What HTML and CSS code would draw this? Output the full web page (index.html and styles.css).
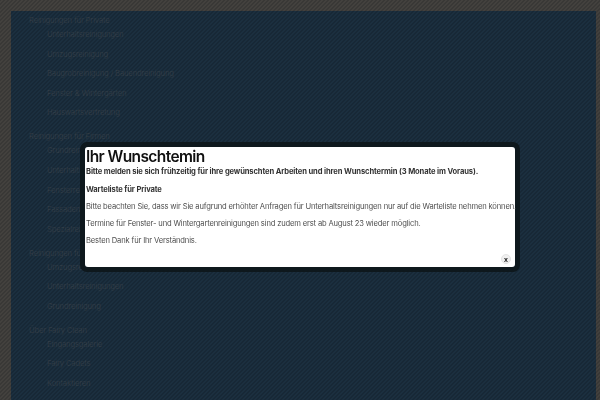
FILE: index.html
```html
<!DOCTYPE html>
<html lang="de">
<head>
    <meta charset="UTF-8">
    <title>Ihr Wunschtermin</title>
    <link rel="stylesheet" href="styles.css">
</head>
<body>
    <div class="page">
        <ul class="menu">
            <li class="group">Reinigungen für Private</li>
            <li>Unterhaltsreinigungen</li>
            <li>Umzugsreinigung</li>
            <li>Baugrobreinigung / Bauendreinigung</li>
            <li>Fenster &amp; Wintergärten</li>
            <li>Hauswartsvertretung</li>
            <li class="group">Reinigungen für Firmen</li>
            <li>Grundreinigung</li>
            <li>Unterhaltsreinigung</li>
            <li>Fensterreinigung</li>
            <li>Fassadenreinigung</li>
            <li>Spezialreinigung</li>
            <li class="group">Reinigungen für Diverse</li>
            <li>Umzugsreinigung</li>
            <li>Unterhaltsreinigungen</li>
            <li>Grundreinigung</li>
            <li class="group">Über Fairy Clean</li>
            <li>Eingangsgalerie</li>
            <li>Fairy Cadets</li>
            <li>Kontaktieren</li>
        </ul>
    </div>

    <div class="overlay"></div>

    <div class="modal">
        <div class="modal-body">
            <h2>Ihr Wunschtemin</h2>
            <p class="lead">Bitte melden sie sich frühzeitig für ihre gewünschten Arbeiten und ihren Wunschtermin (3 Monate im Voraus).</p>
            <p class="lead">Warteliste für Private</p>
            <p>Bitte beachten Sie, dass wir Sie aufgrund erhöhter Anfragen für Unterhaltsreinigungen nur auf die Warteliste nehmen können.</p>
            <p>Termine für Fenster- und Wintergartenreinigungen sind zudem erst ab August 23 wieder möglich.</p>
            <p>Besten Dank für Ihr Verständnis.</p>
            <button class="close">x</button>
        </div>
    </div>
</body>
</html>
```

FILE: styles.css
```css
html, body {
    margin: 0;
    height: 100%;
    overflow: hidden;
}
body {
    background-color: #4e4c49;
    font-family: Inter, "Open Sans", sans-serif;
}
.page {
    margin: 11px 4px 0 11px;
    height: 389px;
    background-color: #20374a;
    overflow: hidden;
}
.menu {
    list-style: none;
    margin: 0;
    padding: 0 0 0 36px;
    font-size: 7.6px;
    letter-spacing: -0.15px;
    color: #3b4955;
}
.menu li {
    height: 19.6px;
    line-height: 19.6px;
}
.menu .group {
    margin: 4.2px 0 -5.5px -18px;
}
.menu .group:first-child {
    margin-top: 0;
}
.overlay {
    position: fixed;
    top: 0;
    left: 0;
    right: 0;
    bottom: 0;
    background-image: repeating-linear-gradient(135deg, rgba(0, 0, 0, 0.26) 0, rgba(0, 0, 0, 0.26) 1.414px, rgba(0, 0, 0, 0.14) 1.414px, rgba(0, 0, 0, 0.14) 2.828px);
}
.modal {
    position: absolute;
    top: 142px;
    left: 80px;
    width: 430px;
    height: 120px;
    border: 5px solid #0e181d;
    border-radius: 7px;
}
.modal-body {
    position: relative;
    height: 100%;
    padding: 0 1px;
    box-sizing: border-box;
    background-color: #fff;
    border-radius: 3px;
    color: #4f4f4f;
    font-size: 7.6px;
    letter-spacing: -0.16px;
    line-height: 12px;
    white-space: nowrap;
}
.modal-body h2 {
    margin: 0;
    padding-top: 1px;
    font-size: 15.5px;
    letter-spacing: -0.6px;
    line-height: 18px;
    font-weight: 600;
    color: #111;
}
.modal-body p {
    margin: 0 0 5px;
}
.modal-body .lead {
    margin-bottom: 5.5px;
    font-weight: 700;
    letter-spacing: -0.13px;
    color: #333;
}
.close {
    position: absolute;
    right: 4px;
    bottom: 3px;
    width: 10px;
    height: 10px;
    padding: 0;
    border: 1px solid #e4e4e4;
    border-radius: 50%;
    background-color: #f0f0f0;
    color: #111;
    font-size: 7px;
    font-weight: 700;
    line-height: 7px;
}
```
